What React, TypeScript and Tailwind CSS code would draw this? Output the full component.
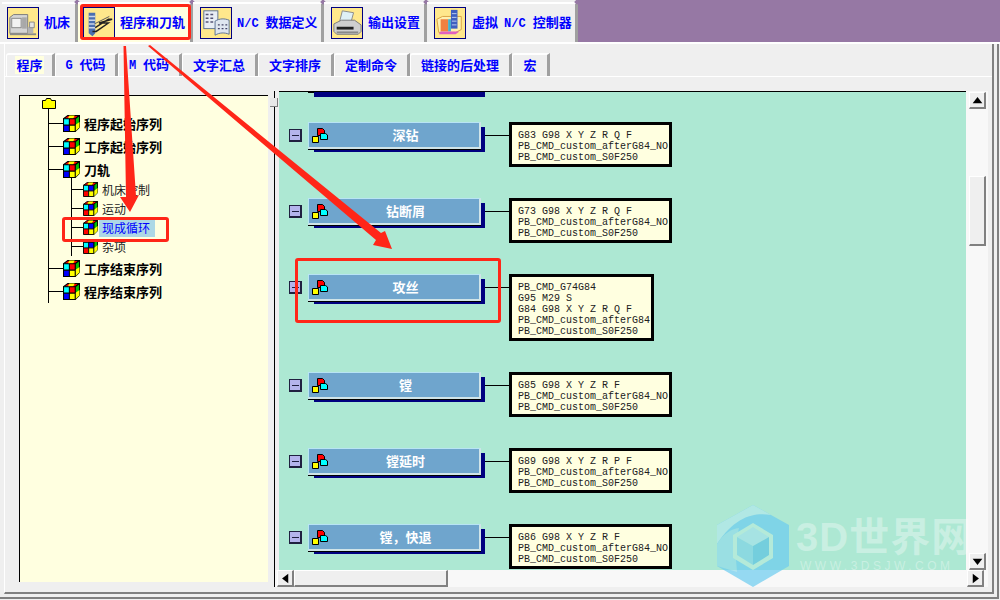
import type { ReactNode } from 'react';

const CJK = 'font-["Noto_Sans_CJK_SC",sans-serif]';

function Latin({ children }: { children: ReactNode }) {
  return <span className='font-["Liberation_Mono",monospace] text-[12px]'>{children}</span>;
}

/* ---------- icons ---------- */
function MachineIcon() {
  return (
    <svg viewBox="0 0 32 32" className="h-full w-full">
      <path d="M2 10l4-3h15v20H2z" fill="#d4d4d4" stroke="#777" />
      <rect x="4" y="11" width="10" height="10" fill="#f2f2f2" stroke="#888" />
      <rect x="15" y="10" width="5" height="12" fill="#a8a8a8" />
      <path d="M2 27h28v2H2z" fill="#8a8a8a" />
      <path d="M21 20h6v7h-6z" fill="#b4b4b4" />
      <path d="M23 15h5v6h-5z" fill="#e4e4e4" stroke="#888" />
    </svg>
  );
}

function ToolpathIcon() {
  return (
    <svg viewBox="0 0 32 32" className="h-full w-full">
      <path d="M5 5h7v22l-3 3-4-3z" fill="#4a6fb0" />
      <path d="M5 9h7M5 13h7M5 17h7M5 21h7" stroke="#c9d4e8" strokeWidth="1.5" />
      <path d="M12 21l14-9h4l-14 4h10l-13 9H9" fill="none" stroke="#222" strokeWidth="1.5" />
      <path d="M11 17L27 9" stroke="#555" />
    </svg>
  );
}

function DataIcon() {
  return (
    <svg viewBox="0 0 32 32" className="h-full w-full">
      <rect x="3" y="3" width="15" height="19" fill="#e8edf5" stroke="#5a6f90" />
      <path d="M5 7h3M10 7h3M5 11h3M10 11h3M5 15h3M10 15h3" stroke="#557" strokeWidth="1.5" />
      <path d="M15 14c5-3 10-3 15-1v15c-5-2-10-2-15 1z" fill="#dfe6f0" stroke="#5a6f90" />
      <path d="M18 18h2M22 18h2M26 18h2M18 22h2M22 22h2M26 22h2" stroke="#446" strokeWidth="1.5" />
    </svg>
  );
}

function PrinterIcon() {
  return (
    <svg viewBox="0 0 32 32" className="h-full w-full">
      <path d="M11 3l12 2-3 11-12-1z" fill="#dff0f6" stroke="#888" />
      <path d="M2 17l8-4h14l7 5v7l-3 3H5l-3-3z" fill="#cfcfcf" stroke="#777" />
      <path d="M5 20h18v3H5z" fill="#222" />
      <path d="M5 26h23" stroke="#888" strokeWidth="2" />
    </svg>
  );
}

function VirtualIcon() {
  return (
    <svg viewBox="0 0 32 32" className="h-full w-full">
      <path d="M2 12l6-3h20v14l-6 3H4z" fill="#fff1b0" stroke="#d8a040" />
      <path d="M6 12h8v13H6z" fill="#f08040" />
      <path d="M14 12h3v13h-3z" fill="#40b0d0" />
      <path d="M17 2h7v20h-7z" fill="#3f5fc0" />
      <path d="M18 6h5M18 10h5M18 14h5M18 18h5" stroke="#c0d0f0" />
      <path d="M6 25h20l-4 3H4z" fill="#e060c0" />
    </svg>
  );
}

function CubeIcon({ small }: { small?: boolean }) {
  const faces = small
    ? ['#00ffff', '#0000ff', '#ff0000', '#ffff00']
    : ['#00ffff', '#ff0000', '#0000ff', '#ffff00'];
  return (
    <svg viewBox="0 0 16 16" className={small ? 'h-[15px] w-[15px] shrink-0' : 'h-[17px] w-[17px] shrink-0'}>
      <path d="M.5 3.500l4-3h11l-4 3z" fill="#ff0000" stroke="#000" />
      <path d="M6 .5h5l-1.500 3h-5z" fill="#ffff00" />
      <path d="M11.500 3.500l4-3v11l-4 4z" fill="#00c000" stroke="#000" />
      <path d="M11.500 9.500l4-3v5l-4 4z" fill="#ffff00" />
      <rect x=".5" y="3.500" width="5.500" height="6" fill={faces[0]} />
      <rect x="6" y="3.500" width="5.500" height="6" fill={faces[1]} />
      <rect x=".5" y="9.500" width="5.500" height="6" fill={faces[2]} />
      <rect x="6" y="9.500" width="5.500" height="6" fill={faces[3]} />
      <path d="M.5 3.500h11v12H.5zM6 3.500v12M.5 9.500h11" fill="none" stroke="#000" />
    </svg>
  );
}

function BlockIcon() {
  return (
    <svg viewBox="0 0 16 16" className="h-[16px] w-[16px] shrink-0">
      <path d="M5.500 1.500h5l2 2v5h-7z" fill="#ff0000" stroke="#000" />
      <path d="M8.500 6.500h5l2 1.500v4.500h-7z" fill="#00ffff" stroke="#000" />
      <path d="M.5 9.500h6v6h-6z" fill="#ffff00" stroke="#000" />
      <path d="M6.500 9.500l2-2" stroke="#000" />
    </svg>
  );
}

function Arrow({ points }: { points: string }) {
  return (
    <svg viewBox="0 0 16 16" className="h-[11px] w-[11px]">
      <polygon points={points} fill="#000" />
    </svg>
  );
}

/* ---------- top tabs ---------- */
const mainTabs: { width: string; pad: string; gap: string; label: ReactNode; icon: ReactNode; active?: boolean }[] = [
  { width: 'w-[76px]', pad: 'pl-[5px]', gap: 'gap-[5px]', label: '机床', icon: <MachineIcon /> },
  { width: 'w-[115px]', pad: 'pl-[5px]', gap: 'gap-[5px]', label: '程序和刀轨', icon: <ToolpathIcon />, active: true },
  {
    width: 'w-[131px]',
    pad: 'pl-[7px]',
    gap: 'gap-[5px]',
    label: (
      <>
        <Latin>N/C</Latin>
        <span className="ml-[7px]">数据定义</span>
      </>
    ),
    icon: <DataIcon />,
  },
  { width: 'w-[103px]', pad: 'pl-[7px]', gap: 'gap-[5px]', label: '输出设置', icon: <PrinterIcon /> },
  {
    width: 'w-[151px]',
    pad: 'pl-[7px]',
    gap: 'gap-[6px]',
    label: (
      <>
        虚拟
        <span className="ml-[6px]">
          <Latin>N/C</Latin>
        </span>
        <span className="ml-[7px]">控制器</span>
      </>
    ),
    icon: <VirtualIcon />,
  },
];

const subTabs: { width: string; label: ReactNode; active?: boolean }[] = [
  { width: 'w-[49px]', label: '程序', active: true },
  {
    width: 'w-[63px]',
    label: (
      <>
        <Latin>G</Latin>
        <span className="ml-[7px]">代码</span>
      </>
    ),
  },
  {
    width: 'w-[64px]',
    label: (
      <>
        <Latin>M</Latin>
        <span className="ml-[7px]">代码</span>
      </>
    ),
  },
  { width: 'w-[76px]', label: '文字汇总' },
  { width: 'w-[76px]', label: '文字排序' },
  { width: 'w-[76px]', label: '定制命令' },
  { width: 'w-[102px]', label: '链接的后处理' },
  { width: 'w-[38px]', label: '宏' },
];

/* ---------- diagram rows ---------- */
const cycles = [
  { name: '深钻', lines: ['G83 G98 X Y Z R Q F', 'PB_CMD_custom_afterG84_NO', 'PB_CMD_custom_S0F250'] },
  { name: '钻断屑', lines: ['G73 G98 X Y Z R Q F', 'PB_CMD_custom_afterG84_NO', 'PB_CMD_custom_S0F250'] },
  {
    name: '攻丝',
    lines: ['PB_CMD_G74G84', 'G95 M29 S', 'G84 G98 X Y Z R Q F', 'PB_CMD_custom_afterG84', 'PB_CMD_custom_S0F250'],
  },
  { name: '镗', lines: ['G85 G98 X Y Z R F', 'PB_CMD_custom_afterG84_NO', 'PB_CMD_custom_S0F250'] },
  { name: '镗延时', lines: ['G89 G98 X Y Z R P F', 'PB_CMD_custom_afterG84_NO', 'PB_CMD_custom_S0F250'] },
  { name: '镗，快退', lines: ['G86 G98 X Y Z R F', 'PB_CMD_custom_afterG84_NO', 'PB_CMD_custom_S0F250'] },
];

function CycleRow({ name, lines }: { name: string; lines: string[] }) {
  return (
    <div className="mb-[31px] flex shrink-0 items-start pl-[10px]">
      <div className="mt-[7px] flex h-[13px] w-[13px] items-center justify-center border border-[#202040] border-r-2 border-b-2 bg-[#b4b4ec]">
        <div className="h-px w-[7px] bg-[#202040]" />
      </div>
      <div className="ml-[6px] flex h-[27px] w-[173px] items-center border-t border-l border-t-[#b8e4f4] border-l-[#b8e4f4] border-r-2 border-b-2 border-r-[#d0e4e8] border-b-[#d0e4e8] bg-[#6fa5cd] pl-[3px] shadow-[0_1px_0_#000,5px_4px_0_-1px_#000080]">
        <BlockIcon />
        <span className={`mb-[2px] flex-1 pl-[4px] text-center text-[13px] font-bold leading-none text-white ${CJK}`}>{name}</span>
      </div>
      <div className="mt-[13px] ml-[4px] h-px w-[24px] bg-black" />
      <div className='border-[3px] border-black bg-[#ffffe0] pt-[5px] pr-[1px] pb-[1px] pl-[6px] font-["Liberation_Mono",monospace] text-[10px] leading-[11px] whitespace-pre text-[#202020]'>
        {lines.map((line) => (
          <div key={line}>{line}</div>
        ))}
      </div>
    </div>
  );
}

/* ---------- tree ---------- */
function TreeRow({ label, last }: { label: string; last?: boolean }) {
  return (
    <div className={`flex h-[23px] items-center ${last ? 'mb-[-11px]' : ''}`}>
      <div className="h-px w-[14px] bg-black" />
      <CubeIcon />
      <span className={`ml-[4px] text-[13px] font-bold text-black ${CJK}`}>{label}</span>
    </div>
  );
}

function TreeChild({ label, selected, last }: { label: string; selected?: boolean; last?: boolean }) {
  return (
    <div className={`flex h-[19px] items-center ${last ? 'mb-[-9px]' : ''}`}>
      <div className="h-px w-[11px] bg-black" />
      <CubeIcon small />
      <span
        className={`text-[12px] leading-[19px] ${CJK} ${
          selected ? 'ml-px bg-[#add8e6] pr-[5px] pl-[3px] text-[#0000ff]' : 'ml-[4px] text-[#222]'
        }`}
      >
        {label}
      </span>
    </div>
  );
}

/* ---------- scrollbars ---------- */
const scrollBtn =
  'flex h-[17px] w-[17px] shrink-0 items-center justify-center border-t border-l border-white border-r-2 border-b-2 border-r-[#808080] border-b-[#808080] bg-[#efefef]';
const scrollThumb = 'border-t border-l border-white border-r-2 border-b-2 border-r-[#808080] border-b-[#808080] bg-[#efefef]';

export default function App() {
  return (
    <div className="relative h-[600px] w-[1000px] overflow-hidden bg-[#efefef]">
      {/* Main tabs */}
      <div className="flex h-[42px]">
        <div className="flex pt-[2px] pl-[2px]">
          {mainTabs.map((tab, i) => (
            <div
              key={i}
              className={`relative flex h-[40px] items-center border-t-2 border-r-[3px] border-t-white border-r-[#a0a0a0] ${tab.width} ${tab.pad} ${tab.gap} ${
                tab.active ? 'bg-[#ffffe0]' : 'bg-[#efefef]'
              }`}
            >
              <div className="h-[32px] w-[32px] shrink-0 border border-[#000080] bg-[#ffe88c]">{tab.icon}</div>
              <span className={`mb-[2px] whitespace-nowrap text-[13px] font-bold text-[#0000ff] ${CJK}`}>{tab.label}</span>
              <div className="absolute top-[-4px] right-[-4px] h-[4px] w-[4px] rotate-45 bg-[#9678a4]" />
            </div>
          ))}
        </div>
        <div className="flex-1 bg-[#9678a4]" />
      </div>
      <div className="h-[2px] bg-white" />

      {/* Frame */}
      <div className="h-[555px] w-[999px] border-r-2 border-b-2 border-[#808080] pr-[3px] pb-[3px]">
        <div className="ml-[4px] flex h-full flex-col border-r-2 border-b-2 border-l border-r-[#808080] border-b-[#808080] border-l-white">
          {/* Sub tabs */}
          <div className="mt-[9px] ml-px flex h-[23px]">
            {subTabs.map((tab, i) => (
              <div
                key={i}
                className={`flex items-center justify-center rounded-tl-[3px] border-t-2 border-r-[3px] border-l border-t-white border-r-[#a0a0a0] border-l-white pb-[2px] text-[13px] font-bold text-[#0000ff] ${CJK} ${tab.width}`}
              >
                <span className={tab.active ? 'bg-[#ffffe0] px-px leading-[18px]' : 'leading-[18px]'}>{tab.label}</span>
              </div>
            ))}
          </div>
          <div className="h-px bg-white" />

          {/* Body */}
          <div className="flex flex-1 pt-[14px] pl-[14px]">
            {/* Tree */}
            <div className="mt-[4px] h-[487px] w-[249px] shrink-0 border-t border-l border-black bg-[#ffffe0] pt-[2px] pl-[22px]">
              <svg viewBox="0 0 14 11" className="h-[11px] w-[14px]">
                <path d="M.5 2.500h3l1-2h4l1 2h4v8H.5z" fill="#ffff00" stroke="#000" />
              </svg>
              <div className="ml-[6px] border-l border-black pt-[3px]">
                <TreeRow label="程序起始序列" />
                <TreeRow label="工序起始序列" />
                <TreeRow label="刀轨" />
                <div className="mt-[-4px] mb-[10px] ml-[22px] border-l border-black pt-[3px]">
                  <TreeChild label="机床控制" />
                  <TreeChild label="运动" />
                  <TreeChild label="现成循环" selected />
                  <TreeChild label="杂项" last />
                </div>
                <TreeRow label="工序结束序列" />
                <TreeRow label="程序结束序列" last />
              </div>
            </div>

            {/* Splitter */}
            <div className="relative h-[496px] w-[6px] shrink-0">
              <div className="absolute top-[7px] left-[2px] z-10 h-[9px] w-[8px] border-r border-b border-[#808080] bg-[#e8e8e8]" />
            </div>

            {/* Diagram with scrollbars */}
            <div className="flex h-[496px] w-[714px] shrink-0 flex-col border-l border-black">
              <div className="flex h-[479px] shrink-0">
                <div className="ml-[4px] flex w-[687px] flex-col overflow-hidden border-t border-black bg-[#ade8d3]">
                  <div className="flex h-[5px] shrink-0 pl-[29px]">
                    <div className="h-px w-[6px] bg-black" />
                    <div className="w-[171px] bg-[#000080]" />
                  </div>
                  <div className="h-[25px] shrink-0" />
                  {cycles.map((c) => (
                    <CycleRow key={c.name} name={c.name} lines={c.lines} />
                  ))}
                </div>
                <div className="flex w-[22px] flex-col bg-[#f8f8f8] pt-[1px] pl-[3px]">
                  <div className={scrollBtn}>
                    <Arrow points="8,3 15,12 1,12" />
                  </div>
                  <div className={`mt-[67px] h-[70px] w-[17px] ${scrollThumb}`} />
                  <div className="flex-1" />
                  <div className={scrollBtn}>
                    <Arrow points="1,4 15,4 8,13" />
                  </div>
                </div>
              </div>
              <div className="flex h-[17px] shrink-0 bg-[#f8f8f8] pl-[2px]">
                <div className={scrollBtn}>
                  <Arrow points="3,8 12,1 12,15" />
                </div>
                <div className={`h-[17px] w-[154px] ${scrollThumb}`} />
                <div className="flex-1" />
                <div className={`mr-[4px] ${scrollBtn}`}>
                  <Arrow points="4,1 13,8 4,15" />
                </div>
              </div>
            </div>
          </div>
        </div>
      </div>

      {/* Watermark */}
      <svg viewBox="0 0 76 86" className="absolute top-[504px] left-[715px] h-[86px] w-[76px] opacity-70">
        <polygon points="38,1 74,21 74,62 38,83 2,62 2,21" fill="#6cccf0" />
        <path d="M2 21L38 1l18 10C40 8 20 12 2 40z" fill="#b4e8ec" />
        <path d="M2 62V40C8 30 16 25 24 24l-4 18 2 26z" fill="#92dcea" />
        <polygon points="38,19 58,31 58,54 38,66 18,54 18,31" fill="#b8ecdc" />
        <polygon points="38,23 54,33 38,42 22,33" fill="#a4e2ea" />
        <polygon points="22,33 38,42 38,61 22,51" fill="#7fd4e6" />
        <polygon points="54,33 38,42 38,61 54,51" fill="#5cc4e2" />
      </svg>
      <div className='absolute top-[513px] left-[796px] font-["Liberation_Sans","Noto_Sans_CJK_SC",sans-serif] text-[40px] leading-[48px] font-bold tracking-[1px] whitespace-nowrap text-white/35'>
        3D世界网
      </div>
      <div className='absolute top-[559px] left-[800px] font-["Liberation_Sans",sans-serif] text-[12px] leading-[14px] tracking-[3.5px] whitespace-nowrap text-white/35'>
        WWW.3DSJW.COM
      </div>

      {/* Red annotations */}
      <div className="absolute top-[4px] left-[80px] h-[36px] w-[111px] rounded-[3px] border-[3px] border-[#ff2618]" />
      <div className="absolute top-[217px] left-[62px] h-[25px] w-[107px] rounded-[3px] border-[3px] border-[#ff2618]" />
      <div className="absolute top-[258px] left-[295px] h-[65px] w-[206px] rounded-[3px] border-[3px] border-[#ff2618]" />
      <svg viewBox="0 0 1000 600" className="pointer-events-none absolute inset-0 h-[600px] w-[1000px]">
        <polygon points="123.500,46 126,46 136,196 139,195 130,212 120,197 126,197" fill="#ff2618" />
        <polygon points="148,46 150,45 381,233 385,231 392,249 373,245 376,240" fill="#ff2618" />
      </svg>
    </div>
  );
}
